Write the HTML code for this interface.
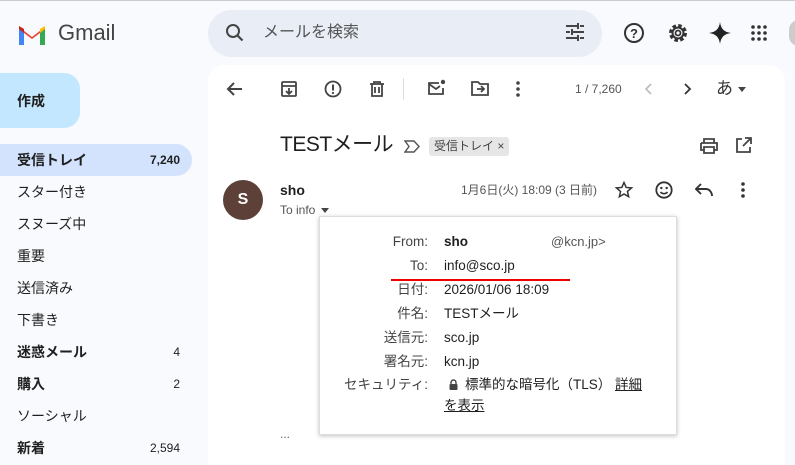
<!DOCTYPE html>
<html><head><meta charset="utf-8"><style>
*{margin:0;padding:0;box-sizing:border-box}
body{width:795px;height:450px;overflow:hidden;background:#f8fafd;font-family:"Liberation Sans","Noto Sans CJK JP",sans-serif;color:#1f1f1f;position:relative}
.a{position:absolute;line-height:1.2}
.nav{position:absolute;left:0;width:192px;height:32px;font-size:14px;padding-left:17px;line-height:32px;border-radius:0 16px 16px 0;color:#1f1f1f}
.nav span{position:absolute;right:12px;font-size:12px}
.b{font-weight:bold}
svg{position:absolute}
.pv{position:absolute;left:444px;font-size:13.5px;color:#1f1f1f;line-height:16px}
.pl{position:absolute;left:320px;width:108px;text-align:right;font-size:13.5px;color:#444;line-height:16px}
</style></head><body>
<div class="a" style="top:0;left:0;width:795px;height:1px;background:#ccc"></div>
<svg style="left:17px;top:22px" width="30" height="23" viewBox="0 0 30 23"><path d="M2 23V5l13 10L28 5v18h-5V11l-8 6-8-6v12z" fill="#ea4335"/><path d="M2 23h5V11L2 7z" fill="#4285f4"/><path d="M23 23h5V7l-5 4z" fill="#34a853"/><path d="M23 11l5-4V4l-5 3z" fill="#fbbc04"/><path d="M2 7V4l5 3v4z" fill="#c5221f"/></svg>
<div class="a" style="left:58px;top:20px;font-size:22px;color:#444">Gmail</div>
<div class="a" style="left:208px;top:10px;width:394px;height:47px;background:#e9eef6;border-radius:24px"></div>
<svg style="left:224px;top:22px" width="22" height="22" viewBox="0 0 22 22"><circle cx="9" cy="9" r="6" fill="none" stroke="#444" stroke-width="2"/><path d="M13.5 13.5l5 5" stroke="#444" stroke-width="2.2"/></svg>
<div class="a" style="left:263px;top:23px;font-size:16px;color:#555;line-height:20px">メールを検索</div>
<svg style="left:565px;top:23px" width="20" height="18" viewBox="0 0 20 18" stroke="#444" stroke-width="2"><path d="M1 3h11M15 3h4M1 9h4M8 9h11M1 15h11M15 15h4M13 0v6M7 6v6M13 12v6"/></svg>
<svg style="left:623px;top:22px" width="22" height="22" viewBox="0 0 22 22"><circle cx="11" cy="11" r="9" fill="none" stroke="#333" stroke-width="2"/><text x="11" y="16" font-size="13" text-anchor="middle" font-family="Liberation Sans" fill="#333" font-weight="bold">?</text></svg>
<svg style="left:667px;top:22px" width="22" height="22" viewBox="0 0 22 22"><circle cx="11" cy="11" r="7" fill="none" stroke="#333" stroke-width="4" stroke-dasharray="3.3 2.2"/><circle cx="11" cy="11" r="5.5" fill="none" stroke="#333" stroke-width="2"/><circle cx="11" cy="11" r="2.5" fill="none" stroke="#333" stroke-width="1.8"/></svg>
<svg style="left:709px;top:22px" width="22" height="22" viewBox="0 0 22 22"><path d="M11 0C12 7 15 10 22 11C15 12 12 15 11 22C10 15 7 12 0 11C7 10 10 7 11 0z" fill="#222"/></svg>
<svg style="left:751px;top:25px" width="16" height="16" viewBox="0 0 16 16" fill="#333"><circle cx="2" cy="2" r="1.8"/><circle cx="8" cy="2" r="1.8"/><circle cx="14" cy="2" r="1.8"/><circle cx="2" cy="8" r="1.8"/><circle cx="8" cy="8" r="1.8"/><circle cx="14" cy="8" r="1.8"/><circle cx="2" cy="14" r="1.8"/><circle cx="8" cy="14" r="1.8"/><circle cx="14" cy="14" r="1.8"/></svg>
<div class="a" style="left:789px;top:20px;width:20px;height:26px;border-radius:10px;background:#ccc"></div>
<div class="a" style="left:0;top:73px;width:80px;height:55px;background:#c2e7ff;border-radius:0 16px 16px 0"></div>
<div class="a b" style="left:17px;top:92px;font-size:14px;line-height:18px">作成</div>
<div class="nav b" style="top:144px;background:#d3e3fd">受信トレイ<span class="b">7,240</span></div>
<div class="nav" style="top:176px">スター付き</div>
<div class="nav" style="top:208px">スヌーズ中</div>
<div class="nav" style="top:240px">重要</div>
<div class="nav" style="top:272px">送信済み</div>
<div class="nav" style="top:304px">下書き</div>
<div class="nav b" style="top:336px">迷惑メール<span style="font-weight:normal">4</span></div>
<div class="nav b" style="top:368px">購入<span style="font-weight:normal">2</span></div>
<div class="nav" style="top:400px">ソーシャル</div>
<div class="nav b" style="top:432px">新着<span style="font-weight:normal">2,594</span></div>
<div class="a" style="left:208px;top:65px;width:577px;height:400px;background:#fff;border-radius:16px 16px 0 0"></div>
<svg style="left:225px;top:81px" width="18" height="16" viewBox="0 0 18 16"><path d="M17 8H3M9 2L3 8l6 6" fill="none" stroke="#444" stroke-width="2"/></svg>
<svg style="left:280px;top:80px" width="18" height="18" viewBox="0 0 18 18" fill="none" stroke="#444" stroke-width="1.8"><rect x="2" y="2" width="14" height="14" rx="1"/><path d="M2 6h14M9 8v6M6 11l3 3 3-3"/></svg>
<svg style="left:324px;top:80px" width="18" height="18" viewBox="0 0 18 18"><circle cx="9" cy="9" r="7.5" fill="none" stroke="#444" stroke-width="1.8"/><path d="M9 4.5v6" stroke="#444" stroke-width="2"/><circle cx="9" cy="13" r="1.1" fill="#444"/></svg>
<svg style="left:368px;top:80px" width="18" height="18" viewBox="0 0 18 18" fill="none" stroke="#444" stroke-width="1.8"><path d="M2 4h14M6 4V2h6v2M4 4v12h10V4M7 7v6M11 7v6"/></svg>
<div class="a" style="left:403px;top:78px;width:1px;height:22px;background:#ddd"></div>
<svg style="left:427px;top:79px" width="19" height="18" viewBox="0 0 19 18" fill="none" stroke="#444" stroke-width="1.8"><path d="M12 4H2v11h14V9"/><path d="M2 5l7 5 4-3"/><circle cx="16" cy="3" r="2.2" fill="#444" stroke="none"/></svg>
<svg style="left:471px;top:80px" width="18" height="16" viewBox="0 0 18 16" fill="none" stroke="#444" stroke-width="1.8"><path d="M1 2h6l2 2h8v11H1z"/><path d="M6 9h7M10 6l3 3-3 3"/></svg>
<svg style="left:516px;top:81px" width="4" height="16" viewBox="0 0 4 16" fill="#444"><circle cx="2" cy="2" r="1.8"/><circle cx="2" cy="8" r="1.8"/><circle cx="2" cy="14" r="1.8"/></svg>
<div class="a" style="left:575px;top:82px;font-size:12px;color:#555">1 / 7,260</div>
<svg style="left:644px;top:83px" width="8" height="12" viewBox="0 0 8 12"><path d="M7 1L2 6l5 5" fill="none" stroke="#bbb" stroke-width="1.6"/></svg>
<svg style="left:684px;top:83px" width="8" height="12" viewBox="0 0 8 12"><path d="M1 1l5 5-5 5" fill="none" stroke="#333" stroke-width="1.8"/></svg>
<div class="a" style="left:716px;top:79px;font-size:17px;color:#333;line-height:20px">あ</div>
<div class="a" style="left:738px;top:87px;border:4px solid transparent;border-top:5px solid #444"></div>
<div class="a" style="left:280px;top:132px;font-size:21px;color:#1f1f1f;letter-spacing:-0.5px;line-height:26px">TESTメール</div>
<svg style="left:404px;top:140px" width="16" height="13" viewBox="0 0 16 13"><path d="M1 1h9l5 5.5-5 5.5H1l4-5.5z" fill="none" stroke="#555" stroke-width="1.4"/></svg>
<div class="a" style="left:429px;top:137px;height:19px;padding:0 5px;background:#e6e6e6;border-radius:3px;font-size:12px;line-height:19px;color:#444">受信トレイ ×</div>
<svg style="left:700px;top:138px" width="18" height="16" viewBox="0 0 18 16" fill="none" stroke="#444" stroke-width="1.8"><path d="M4 5V1h10v4M1 5h16v7h-3M4 12H1V5M4 9h10v6H4z"/></svg>
<svg style="left:735px;top:137px" width="17" height="17" viewBox="0 0 17 17" fill="none" stroke="#444" stroke-width="1.8"><path d="M7 2H2v13h13v-5M10 1h6v6M16 1L8 9"/></svg>
<div class="a" style="left:223px;top:180px;width:40px;height:40px;border-radius:50%;background:#5d4037;color:#fff;font-size:16px;font-weight:bold;text-align:center;line-height:40px">S</div>
<div class="a b" style="left:280px;top:182px;font-size:14px">sho</div>
<div class="a" style="left:280px;top:203px;font-size:12px;color:#555">To info</div>
<div class="a" style="left:321px;top:208px;border:4px solid transparent;border-top:5px solid #444"></div>
<div class="a" style="left:461px;top:183px;font-size:12px;color:#555;line-height:15px">1月6日(火) 18:09 (3 日前)</div>
<svg style="left:615px;top:181px" width="18" height="18" viewBox="0 0 24 24"><path d="M12 2l2.9 6.6 7.1.6-5.4 4.7 1.6 7L12 17.3 5.8 21l1.6-7L2 9.2l7.1-.6z" fill="none" stroke="#333" stroke-width="2"/></svg>
<svg style="left:655px;top:181px" width="18" height="18" viewBox="0 0 18 18"><circle cx="9" cy="9" r="7.7" fill="none" stroke="#333" stroke-width="1.8"/><circle cx="6.3" cy="7" r="1.2" fill="#333"/><circle cx="11.7" cy="7" r="1.2" fill="#333"/><path d="M5.5 11c1.7 2.3 5.3 2.3 7 0" fill="none" stroke="#333" stroke-width="1.6"/></svg>
<svg style="left:695px;top:183px" width="18" height="14" viewBox="0 0 18 14"><path d="M6 1L1 6l5 5M1 6h10c3 0 6 3 6 7" fill="none" stroke="#333" stroke-width="1.9"/></svg>
<svg style="left:741px;top:182px" width="4" height="16" viewBox="0 0 4 16" fill="#333"><circle cx="2" cy="2" r="1.8"/><circle cx="2" cy="8" r="1.8"/><circle cx="2" cy="14" r="1.8"/></svg>
<div class="a" style="left:280px;top:427px;font-size:12px;color:#666">...</div>
<div class="a" style="left:319px;top:216px;width:358px;height:219px;background:#fff;border:1px solid #ddd;box-shadow:0 1px 4px rgba(0,0,0,.25)"></div>
<div class="pl" style="top:234px">From:</div><div class="pv b" style="top:234px">sho</div><div class="pv" style="left:551px;top:234px;color:#555;font-size:13px">@kcn.jp&gt;</div>
<div class="pl" style="top:258px">To:</div><div class="pv" style="top:258px">info@sco.jp</div>
<div class="a" style="left:391px;top:279px;width:179px;height:2px;background:#e00"></div>
<div class="pl" style="top:282px">日付:</div><div class="pv" style="top:282px">2026/01/06 18:09</div>
<div class="pl" style="top:306px">件名:</div><div class="pv" style="top:306px">TESTメール</div>
<div class="pl" style="top:330px">送信元:</div><div class="pv" style="top:330px">sco.jp</div>
<div class="pl" style="top:354px">署名元:</div><div class="pv" style="top:354px">kcn.jp</div>
<div class="pl" style="top:377px">セキュリティ:</div>
<svg style="left:449px;top:379px" width="9" height="11" viewBox="0 0 9 11"><path d="M2 5V3.5a2.5 2.5 0 0 1 5 0V5" fill="none" stroke="#444" stroke-width="1.4"/><rect x="0.5" y="5" width="8" height="6" rx="1" fill="#444"/></svg>
<div class="pv" style="left:465px;top:377px">標準的な暗号化（TLS） <u>詳細</u></div>
<div class="pv" style="top:398px"><u>を表示</u></div>
</body></html>
